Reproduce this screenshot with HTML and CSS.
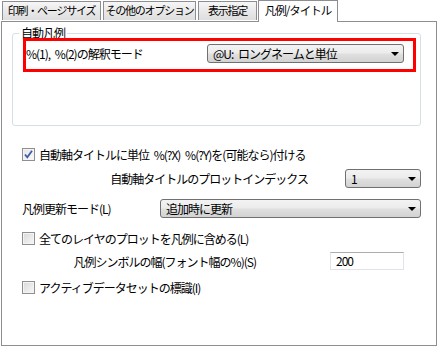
FILE: index.html
```html
<!DOCTYPE html>
<html lang="ja">
<head>
    <meta charset="UTF-8">
    <title>凡例/タイトル</title>
    <link rel="stylesheet" href="styles.css">
</head>
<body>
    <div class="dialog">
        <div class="tabs">
            <div class="tab tab-print">印刷・ページサイズ</div>
            <div class="tab tab-other">その他のオプション</div>
            <div class="tab tab-display">表示指定</div>
            <div class="tab tab-legend active">凡例/タイトル</div>
        </div>

        <div class="panel">
            <div class="group">
                <span class="group-title">自動凡例</span>
                <div class="group-row">
                    <span>%(1), %(2)の解釈モード</span>
                    <div class="combo combo-mode">
                        <span>@U: ロングネームと単位</span>
                        <span class="arrow"></span>
                    </div>
                </div>
            </div>

            <!-- highlight drawn over the interpretation mode row -->
            <div class="highlight"></div>

            <div class="rows">
                <div class="row row-axis">
                    <span class="check checked">
                        <svg width="11" height="11" viewBox="0 0 11 11"><path d="M2 5.5 L4.3 8.3 L9 1.8" fill="none" stroke="#3f5aa8" stroke-width="1.8"/></svg>
                    </span>
                    <span>自動軸タイトルに単位 %(?X) %(?Y)を(可能なら)付ける</span>
                </div>

                <div class="row row-index">
                    <span class="label-right label-index">自動軸タイトルのプロットインデックス</span>
                    <div class="combo combo-index">
                        <span>1</span>
                        <span class="arrow"></span>
                    </div>
                </div>

                <div class="row row-update">
                    <span>凡例更新モード(L)</span>
                    <div class="combo combo-update">
                        <span>追加時に更新</span>
                        <span class="arrow"></span>
                    </div>
                </div>

                <div class="row row-layers">
                    <span class="check"></span>
                    <span>全てのレイヤのプロットを凡例に含める(L)</span>
                </div>

                <div class="row row-width">
                    <span class="label-right label-width">凡例シンボルの幅(フォント幅の%)(S)</span>
                    <div class="textbox">200</div>
                </div>

                <div class="row row-active">
                    <span class="check"></span>
                    <span>アクティブデータセットの標識(I)</span>
                </div>
            </div>
        </div>
    </div>
</body>
</html>
```

FILE: styles.css
```css
* {
    margin: 0;
    padding: 0;
    box-sizing: border-box;
}

body {
    font-family: "Noto Sans CJK JP", "Noto Sans", sans-serif;
    font-size: 12px;
    letter-spacing: -1px;
    word-spacing: 3px;
    color: #000;
    background: #fff;
    width: 440px;
    height: 347px;
    overflow: hidden;
}

.dialog {
    padding-left: 1px;
}

/* tab strip */
.tabs {
    display: flex;
    align-items: flex-end;
    height: 21px;
    padding-left: 1px;
    position: relative;
    z-index: 1;
}

.tab {
    height: 19px;
    line-height: 17px;
    text-align: center;
    white-space: nowrap;
    font-size: 11px;
    letter-spacing: -1.2px;
    border: 1px solid #8c8e94;
    border-bottom: none;
    background: linear-gradient(#f6f6f6, #e9e9e9 50%, #dedede);
    margin-bottom: 1px;
}

.tab-print { width: 99px; }
.tab-other { width: 93px; margin-left: 2px; }
.tab-display { width: 59px; margin-left: 2px; }

.tab.active {
    width: 80px;
    height: 22px;
    line-height: 19px;
    font-size: 11.5px;
    letter-spacing: -1px;
    background: #fff;
    margin-bottom: -1px;
    margin-left: 1px;
}

.panel {
    position: relative;
    width: 436px;
    height: 325px;
    border: 1px solid #8c8e94;
    padding: 11px 15px 0 10px;
}

/* group box */
.group {
    position: relative;
    height: 93px;
    border: 1px solid #d5dfe5;
    border-radius: 3px;
    padding: 10px 16px 0 13px;
}

.group-title {
    position: absolute;
    top: -9px;
    left: 6px;
    padding: 0 2px;
    background: #fff;
    line-height: 16px;
}

.group-row {
    display: flex;
    align-items: center;
    justify-content: space-between;
    height: 19px;
}

.highlight {
    position: absolute;
    left: 21px;
    top: 16px;
    width: 393px;
    height: 34px;
    border: 3px solid #f00;
}

/* combo boxes */
.combo {
    display: flex;
    align-items: center;
    justify-content: space-between;
    height: 19px;
    padding: 0 4px 0 5px;
    border: 1px solid #707070;
    border-radius: 3px;
    background: linear-gradient(#f3f3f3, #ececec 45%, #dfdfdf 55%, #d2d2d2);
    white-space: nowrap;
}

.combo-mode { width: 197px; }
.combo-index { width: 76px; margin-left: auto; }
.combo-update { width: 261px; }

.arrow {
    width: 0;
    height: 0;
    border-left: 4px solid transparent;
    border-right: 4px solid transparent;
    border-top: 4px solid #000;
    margin-top: 1px;
}

/* lower rows */
.rows {
    padding: 18px 0 0 10px;
}

.row {
    display: flex;
    align-items: center;
    height: 20px;
    white-space: nowrap;
}

.row-index { margin-top: 4px; }
.row-update { margin-top: 10px; justify-content: space-between; }
.row-layers { margin-top: 10px; }
.row-width { margin-top: 3px; }
.row-active { margin-top: 6px; }

.label-right {
    text-align: right;
}

.label-index { width: 286px; }
.label-width { width: 234px; }

.check {
    display: inline-flex;
    align-items: center;
    justify-content: center;
    flex-shrink: 0;
    width: 13px;
    height: 13px;
    margin-right: 4px;
    border: 1px solid #8e8f8f;
    background: linear-gradient(135deg, #d9d9d9, #f7f7f7);
    box-shadow: inset 0 0 0 1px #f4f4f4;
}

.check.checked {
    background: linear-gradient(135deg, #e4e4e4, #fbfbfb);
}

.textbox {
    width: 74px;
    height: 18px;
    margin-left: 74px;
    padding-left: 5px;
    line-height: 16px;
    border: 1px solid #e2e3ea;
    border-top-color: #abadb3;
    background: #fff;
}
```
